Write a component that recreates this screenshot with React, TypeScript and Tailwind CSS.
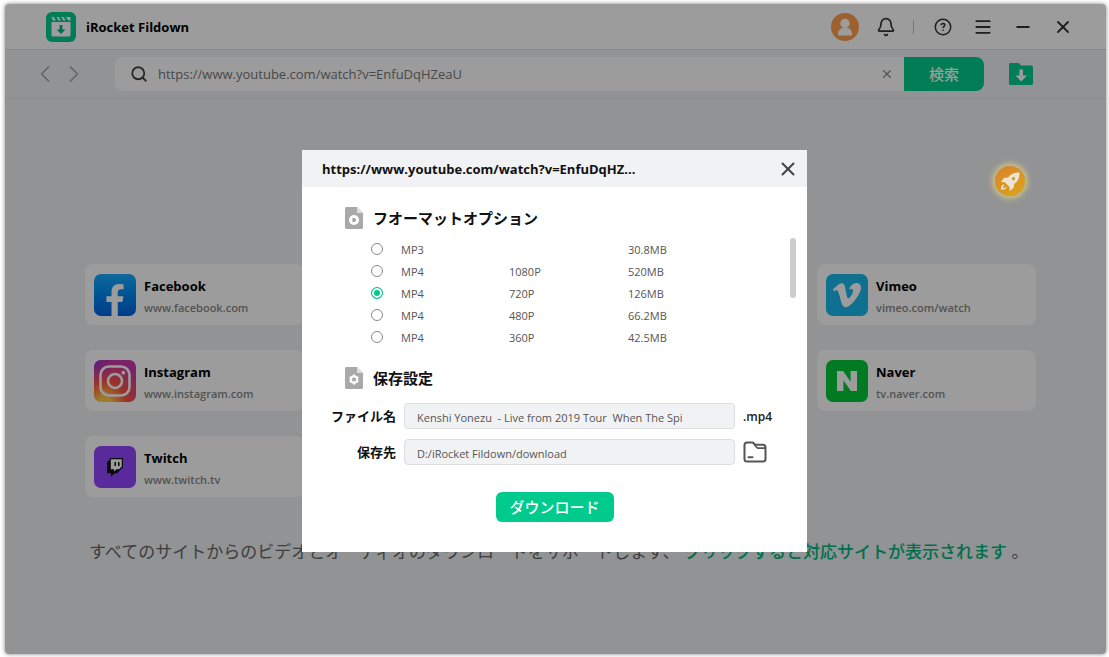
import { useState } from 'react';
import type { ReactNode } from 'react';
import { FaFacebookF, FaVimeoV } from 'react-icons/fa';
import { SiNaver } from 'react-icons/si';
import { Bell, Menu, Minus, Search, X, ChevronLeft, ChevronRight } from 'lucide-react';

const VIDEO_URL = 'https://www.youtube.com/watch?v=EnfuDqHZeaU';

const formats = [
  { id: 'mp3', type: 'MP3', quality: '', size: '30.8MB' },
  { id: '1080p', type: 'MP4', quality: '1080P', size: '520MB' },
  { id: '720p', type: 'MP4', quality: '720P', size: '126MB' },
  { id: '480p', type: 'MP4', quality: '480P', size: '66.2MB' },
  { id: '360p', type: 'MP4', quality: '360P', size: '42.5MB' },
];

function AppLogo() {
  return (
    <svg viewBox="0 0 30 30" className="h-[30px] w-[30px]">
      <rect width="30" height="30" rx="6" fill="#00cd8c" />
      <path d="M5.500 5h2.200l2.200 3.500H7zM10.500 5h2.200l2.200 3.500h-2.400zM15.300 5h2.200l2.200 3.500h-2.400zM20 5h4.500v3.500h-2.300z" fill="#fff" />
      <path d="M5.500 10h19v13a1.500 1.500 0 0 1-1.500 1.500H7A1.500 1.500 0 0 1 5.500 23z" fill="#fff" />
      <path d="M13.600 13h2.800v4.500h3L15 22l-4.400-4.500h3z" fill="#00b47c" />
    </svg>
  );
}

function AvatarIcon() {
  return (
    <svg viewBox="0 0 28 28" className="h-7 w-7">
      <circle cx="14" cy="14" r="14" fill="#ff9f4e" />
      <circle cx="14" cy="10.500" r="4.700" fill="#fff" />
      <path d="M7 21.500c0-4 2.500-6.500 4.500-6.500h5c2 0 4.500 2.500 4.500 6.500 0 .6-.4 1-1 1H8c-.6 0-1-.4-1-1z" fill="#fff" />
    </svg>
  );
}

function HelpIcon() {
  return (
    <svg viewBox="0 0 18 18" className="h-[18px] w-[18px]" fill="none" stroke="currentColor" strokeWidth="1.500">
      <circle cx="9" cy="9" r="7.700" />
      <path d="M7.200 7.300c0-1.200.8-1.900 1.800-1.900s1.800.7 1.800 1.700c0 1.300-1.700 1.400-1.700 2.900" />
      <path d="M9.100 11.400v1.400" />
    </svg>
  );
}

function FolderDownIcon() {
  return (
    <svg viewBox="0 0 24 22" className="h-[22px] w-6">
      <path d="M0 1.500C0 .7.700 0 1.500 0h8.200l2.300 2.500h10.500c.8 0 1.500.7 1.500 1.500v16.500c0 .8-.7 1.500-1.500 1.500h-21C.7 22 0 21.300 0 20.500z" fill="#00cd8c" />
      <path d="M10.400 6.500h3.600v6h4L12.200 18.500l-5.800-6h4z" fill="#fff" />
    </svg>
  );
}

function InstagramIcon() {
  return (
    <svg viewBox="0 0 42 42" className="h-[42px] w-[42px]">
      <defs>
        <radialGradient id="igWarm" cx="0.250" cy="1.050" r="1.050">
          <stop offset="0" stopColor="#ffdc4c" />
          <stop offset="0.150" stopColor="#ffc94a" />
          <stop offset="0.500" stopColor="#ff543e" />
          <stop offset="1" stopColor="#c837ab" />
        </radialGradient>
        <radialGradient id="igCool" cx="0" cy="0" r="0.600">
          <stop offset="0" stopColor="#8a35c8" />
          <stop offset="1" stopColor="#c837ab" stopOpacity="0" />
        </radialGradient>
      </defs>
      <rect width="42" height="42" rx="7" fill="url(#igWarm)" />
      <rect width="42" height="42" rx="7" fill="url(#igCool)" />
      <g fill="none" stroke="#fff" strokeWidth="2.600">
        <rect x="6.500" y="6.500" width="29" height="29" rx="8.500" />
        <circle cx="21" cy="21" r="7" />
      </g>
      <circle cx="29.300" cy="12.700" r="1.900" fill="#fff" />
    </svg>
  );
}

function TwitchIcon() {
  return (
    <svg viewBox="0 0 42 42" className="h-[42px] w-[42px]">
      <rect width="42" height="42" rx="7" fill="#9146ff" />
      <path d="M16.500 12l-3.500 4.500v10.700h4v3.600l3.700-3.600h2.500l5.800-6V12z" fill="#111" />
      <path d="M16.800 13.300h11v7.200l-2.700 2.800h-2.700L20 25.600v-2.300h-3.200z" fill="#fff" />
      <path d="M20.500 16h1.500v4h-1.500zM24 16h1.500v4H24z" fill="#111" />
    </svg>
  );
}

function RocketBadge() {
  return (
    <svg viewBox="0 0 30 30" className="h-[30px] w-[30px]">
      <defs>
        <linearGradient id="badge" x1="0" y1="0" x2="0.600" y2="1">
          <stop offset="0" stopColor="#d9822b" />
          <stop offset="1" stopColor="#dba01c" />
        </linearGradient>
      </defs>
      <circle cx="15" cy="15" r="15" fill="url(#badge)" />
      <path
        fillRule="evenodd"
        d="M24.500 6.500c-5.500-.4-9.200 1.700-11.500 5l-4 .6-3 4 3.700.1 5 5-.2 3.800 4-3.100.8-4c3.400-2.200 5.400-6 5.200-11.400zM18.400 11a1.600 1.600 0 1 1 .1 3.200 1.600 1.600 0 0 1-.1-3.200z"
        fill="#e9e4d4"
      />
      <path d="M8.500 18c-2 1-2.600 3.300-2.300 5.700 2.500.2 4.500-.4 5.600-2.400l-1.300-.4c-.6.9-1.500 1.200-2.500 1.200 0-1 .2-2 1.100-2.600z" fill="#e9e4d4" />
    </svg>
  );
}

function FileIcon({ children }: { children: ReactNode }) {
  return (
    <svg viewBox="0 0 18 22" className="h-[22px] w-[18px]">
      <path d="M1.500 0H12l6 6v14.500c0 .8-.7 1.500-1.500 1.500h-15C.7 22 0 21.300 0 20.500v-19C0 .7.700 0 1.500 0z" fill="#a9a9a9" />
      <path d="M12 0l6 6h-5c-.6 0-1-.4-1-1z" fill="#dedede" />
      {children}
    </svg>
  );
}

function FolderIcon() {
  return (
    <svg viewBox="0 0 24 22" className="h-[22px] w-6" fill="none" stroke="#555" strokeWidth="2" strokeLinejoin="round" strokeLinecap="round">
      <path d="M1.500 4c0-1.400 1-2.500 2.500-2.500h5c.8 0 1.500.3 2 1l1 1.200h8c1.400 0 2.500 1 2.500 2.500v11.800c0 1.400-1 2.500-2.500 2.500H4c-1.400 0-2.500-1-2.500-2.500z" />
      <path d="M11.500 3.700l2.300 2.700c.4.500.9.700 1.500.7h7" strokeWidth="1.600" />
      <path d="M5.500 16.300h4" />
    </svg>
  );
}

const sites = [
  {
    name: 'Facebook',
    host: 'www.facebook.com',
    place: 'col-start-1 row-start-1',
    icon: (
      <span className="flex h-[42px] w-[42px] items-end justify-center overflow-hidden rounded-[7px] bg-linear-to-b from-[#18acfe] to-[#0163e0]">
        <FaFacebookF className="h-8 w-6 text-white" />
      </span>
    ),
  },
  {
    name: 'Vimeo',
    host: 'vimeo.com/watch',
    place: 'col-start-4 row-start-1',
    icon: (
      <span className="flex h-[42px] w-[42px] items-center justify-center rounded-[7px] bg-[#1ab7ea]">
        <FaVimeoV className="h-8 w-8 text-white" />
      </span>
    ),
  },
  { name: 'Instagram', host: 'www.instagram.com', place: 'col-start-1 row-start-2', icon: <InstagramIcon /> },
  {
    name: 'Naver',
    host: 'tv.naver.com',
    place: 'col-start-4 row-start-2',
    icon: (
      <span className="flex h-[42px] w-[42px] items-center justify-center rounded-[7px] bg-[#00ca38]">
        <SiNaver className="h-5 w-[22px] text-white" />
      </span>
    ),
  },
  { name: 'Twitch', host: 'www.twitch.tv', place: 'col-start-1 row-start-3', icon: <TwitchIcon /> },
];

function TitleBar() {
  return (
    <header className="flex h-[46px] items-center border-b border-[#dfe1e4] bg-white pr-[33px] pl-[41px] text-[#333]">
      <AppLogo />
      <h1 className="ml-2.5 flex-1 pt-0.5 text-[13px] font-bold text-black">iRocket Fildown</h1>
      <div className="mr-[19px] flex items-center gap-[17px]">
        <button type="button" aria-label="アカウント"><AvatarIcon /></button>
        <button type="button" aria-label="通知"><Bell className="h-5 w-5" strokeWidth={2} /></button>
        <span className="h-3.5 w-px bg-[#c4c4c4]" />
      </div>
      <div className="flex items-center gap-5">
        <button type="button" aria-label="ヘルプ" className="flex w-5 justify-center"><HelpIcon /></button>
        <button type="button" aria-label="メニュー"><Menu className="h-5 w-5" strokeWidth={2.2} /></button>
        <button type="button" aria-label="最小化"><Minus className="h-5 w-5" strokeWidth={2.2} /></button>
        <button type="button" aria-label="閉じる"><X className="h-5 w-5" strokeWidth={2.2} /></button>
      </div>
    </header>
  );
}

function SearchBar() {
  const [url, setUrl] = useState(VIDEO_URL);

  return (
    <div className="flex h-[49px] items-center border-b border-[#e4e6e9] pr-[73px] pl-[30px]">
      <button type="button" aria-label="戻る"><ChevronLeft className="h-5 w-5 scale-140 text-[#a4a6a9]" strokeWidth={1.5} /></button>
      <button type="button" aria-label="進む" className="ml-[9px]"><ChevronRight className="h-5 w-5 scale-140 text-[#a4a6a9]" strokeWidth={1.5} /></button>
      <div className="ml-[31px] flex h-[34px] flex-1 overflow-hidden rounded-lg bg-white">
        <label htmlFor="url" aria-label="URL" className="flex items-center pr-2.5 pl-[15px]">
          <Search className="h-[18px] w-[18px] text-[#444]" strokeWidth={2.4} />
        </label>
        <input
          id="url"
          value={url}
          onChange={(e) => setUrl(e.target.value)}
          className="min-w-0 flex-1 pt-0.5 text-[13px] text-[#777] outline-none"
        />
        <button type="button" aria-label="クリア" onClick={() => setUrl('')} className="px-2.5">
          <X className="h-3.5 w-3.5 text-[#888]" />
        </button>
        <button type="button" className="w-20 bg-[#00cd8c] text-[15px] font-medium text-white">検索</button>
      </div>
      <button type="button" aria-label="ダウンロード一覧" className="ml-[25px]"><FolderDownIcon /></button>
    </div>
  );
}

function DownloadDialog() {
  const [format, setFormat] = useState('720p');
  const [fileName, setFileName] = useState('Kenshi Yonezu  - Live from 2019 Tour  When The Spi');
  const [folder, setFolder] = useState('D:/iRocket Fildown/download');

  return (
    <section role="dialog" aria-labelledby="dialog-title" className="w-[505px] bg-white pb-[30px]">
      <div className="flex h-[37px] items-center justify-between bg-[#f1f2f4] pr-[9px] pl-5">
        <h2 id="dialog-title" className="pt-0.5 text-[13px] font-bold text-[#111]">https://www.youtube.com/watch?v=EnfuDqHZ...</h2>
        <button type="button" aria-label="閉じる"><X className="h-5 w-5 scale-110 text-[#444]" strokeWidth={2.2} /></button>
      </div>

      <div className="mt-5 flex items-center gap-2.5 pl-[43px]">
        <FileIcon>
          <circle cx="9" cy="13" r="5" fill="#fff" />
          <path d="M7.500 10.800c2 0 3.500.8 3.500 2.200s-1.500 2.200-3.500 2.200z" fill="#a0a0a0" />
        </FileIcon>
        <h3 className="text-[15px] leading-[22px] font-bold text-[#111]">フオーマットオプション</h3>
      </div>

      <div className="mt-[9px] flex justify-between pr-[11px] pl-[69px]">
        <table className="text-left text-[11px] leading-4 text-[#555]">
          <tbody>
            {formats.map((f) => (
              <tr key={f.id} className="h-[22px]">
                <td className="w-[30px]">
                  <input
                    type="radio"
                    id={f.id}
                    name="format"
                    checked={format === f.id}
                    onChange={() => setFormat(f.id)}
                    className="block h-3 w-3 appearance-none rounded-full border border-[#888] bg-white checked:border-[#00c98d] checked:bg-[#00c98d] checked:shadow-[inset_0_0_0_2px_#fff]"
                  />
                </td>
                <td className="w-[108px] pt-0.5"><label htmlFor={f.id}>{f.type}</label></td>
                <td className="w-[119px] pt-0.5">{f.quality}</td>
                <td className="pt-0.5">{f.size}</td>
              </tr>
            ))}
          </tbody>
        </table>
        <div className="h-[60px] w-1.5 rounded-full bg-[#cdcdcd]" />
      </div>

      <div className="mt-[19px] flex items-center gap-2.5 pl-[43px]">
        <FileIcon>
          <circle cx="9" cy="12.500" r="3.100" fill="none" stroke="#fff" strokeWidth="2.400" />
          <path d="M9 7.500v10M4.700 10l2 1.200M11.300 13.800l2 1.200M4.700 15l2-1.200M11.300 11.200l2-1.200" stroke="#fff" strokeWidth="2" />
          <circle cx="9" cy="12.500" r="2" fill="#a9a9a9" />
        </FileIcon>
        <h3 className="text-[15px] leading-[22px] font-bold text-[#111]">保存設定</h3>
      </div>

      <form className="mt-[14px]" onSubmit={(e) => e.preventDefault()}>
        <div className="grid grid-cols-[94px_1fr_72px] items-center gap-y-2.5 text-[11px] text-[#555]">
          <label htmlFor="file-name" className="text-right text-[13px] leading-5 font-bold text-[#111]">ファイル名</label>
          <input
            id="file-name"
            value={fileName}
            onChange={(e) => setFileName(e.target.value)}
            className="ml-2 h-[26px] rounded-sm border border-[#dcdee1] bg-[#f1f2f4] px-3 pt-0.5 whitespace-pre outline-none"
          />
          <span className="pt-0.5 pl-2 text-[12px] font-semibold text-[#222]">.mp4</span>
          <label htmlFor="folder" className="text-right text-[13px] leading-5 font-bold text-[#111]">保存先</label>
          <input
            id="folder"
            value={folder}
            onChange={(e) => setFolder(e.target.value)}
            className="ml-2 h-[26px] rounded-sm border border-[#dcdee1] bg-[#f1f2f4] px-3 pt-0.5 outline-none"
          />
          <button type="button" aria-label="フォルダを選択" className="pl-2"><FolderIcon /></button>
        </div>
        <button type="submit" className="mx-auto mt-[27px] block h-[30px] w-[118px] rounded-md bg-[#00cb8d] text-[15px] font-medium text-white">
          ダウンロード
        </button>
      </form>
    </section>
  );
}

export default function App() {
  return (
    <div className="relative flex min-h-screen bg-white pt-1 pr-[3px] pb-[3px] pl-[5px] font-['Open_Sans','Noto_Sans_CJK_JP',sans-serif]">
      <div className="relative flex-1 overflow-hidden rounded-sm bg-[#eff0f2] shadow-[0_0_4px_rgba(0,0,0,0.5)]">
        <TitleBar />
        <SearchBar />
        <main className="pt-[165px] pr-[70px] pl-20">
          <div className="grid grid-cols-4 gap-[25px]">
            {sites.map((site) => (
              <a key={site.name} href={`https://${site.host}`} className={`flex h-[61px] items-center gap-2 rounded-lg bg-white pl-[9px] ${site.place}`}>
                {site.icon}
                <span className="pt-1">
                  <span className="block text-[13px] leading-[21px] font-bold text-black">{site.name}</span>
                  <span className="block text-[11px] leading-[21px] font-semibold text-[#888]">{site.host}</span>
                </span>
              </a>
            ))}
          </div>
          <p className="mt-[43px] pl-1 text-[17px] leading-6 whitespace-nowrap text-[#666]">
            すべてのサイトからのビデオとオーディオのダウンロードをサポートします、{' '}
            <a href="#sites" className="font-medium text-[#00b57c]">クリックすると対応サイトが表示されます</a> 。
          </p>
        </main>
        <div className="absolute inset-0 bg-black/39" />
        <button type="button" aria-label="ブースト" className="absolute top-[162px] right-[81px] rounded-full shadow-[0_0_6px_2px_#d8cf80]">
          <RocketBadge />
        </button>
      </div>
      <div className="absolute inset-0 flex items-start justify-center pt-[150px]">
        <DownloadDialog />
      </div>
    </div>
  );
}
